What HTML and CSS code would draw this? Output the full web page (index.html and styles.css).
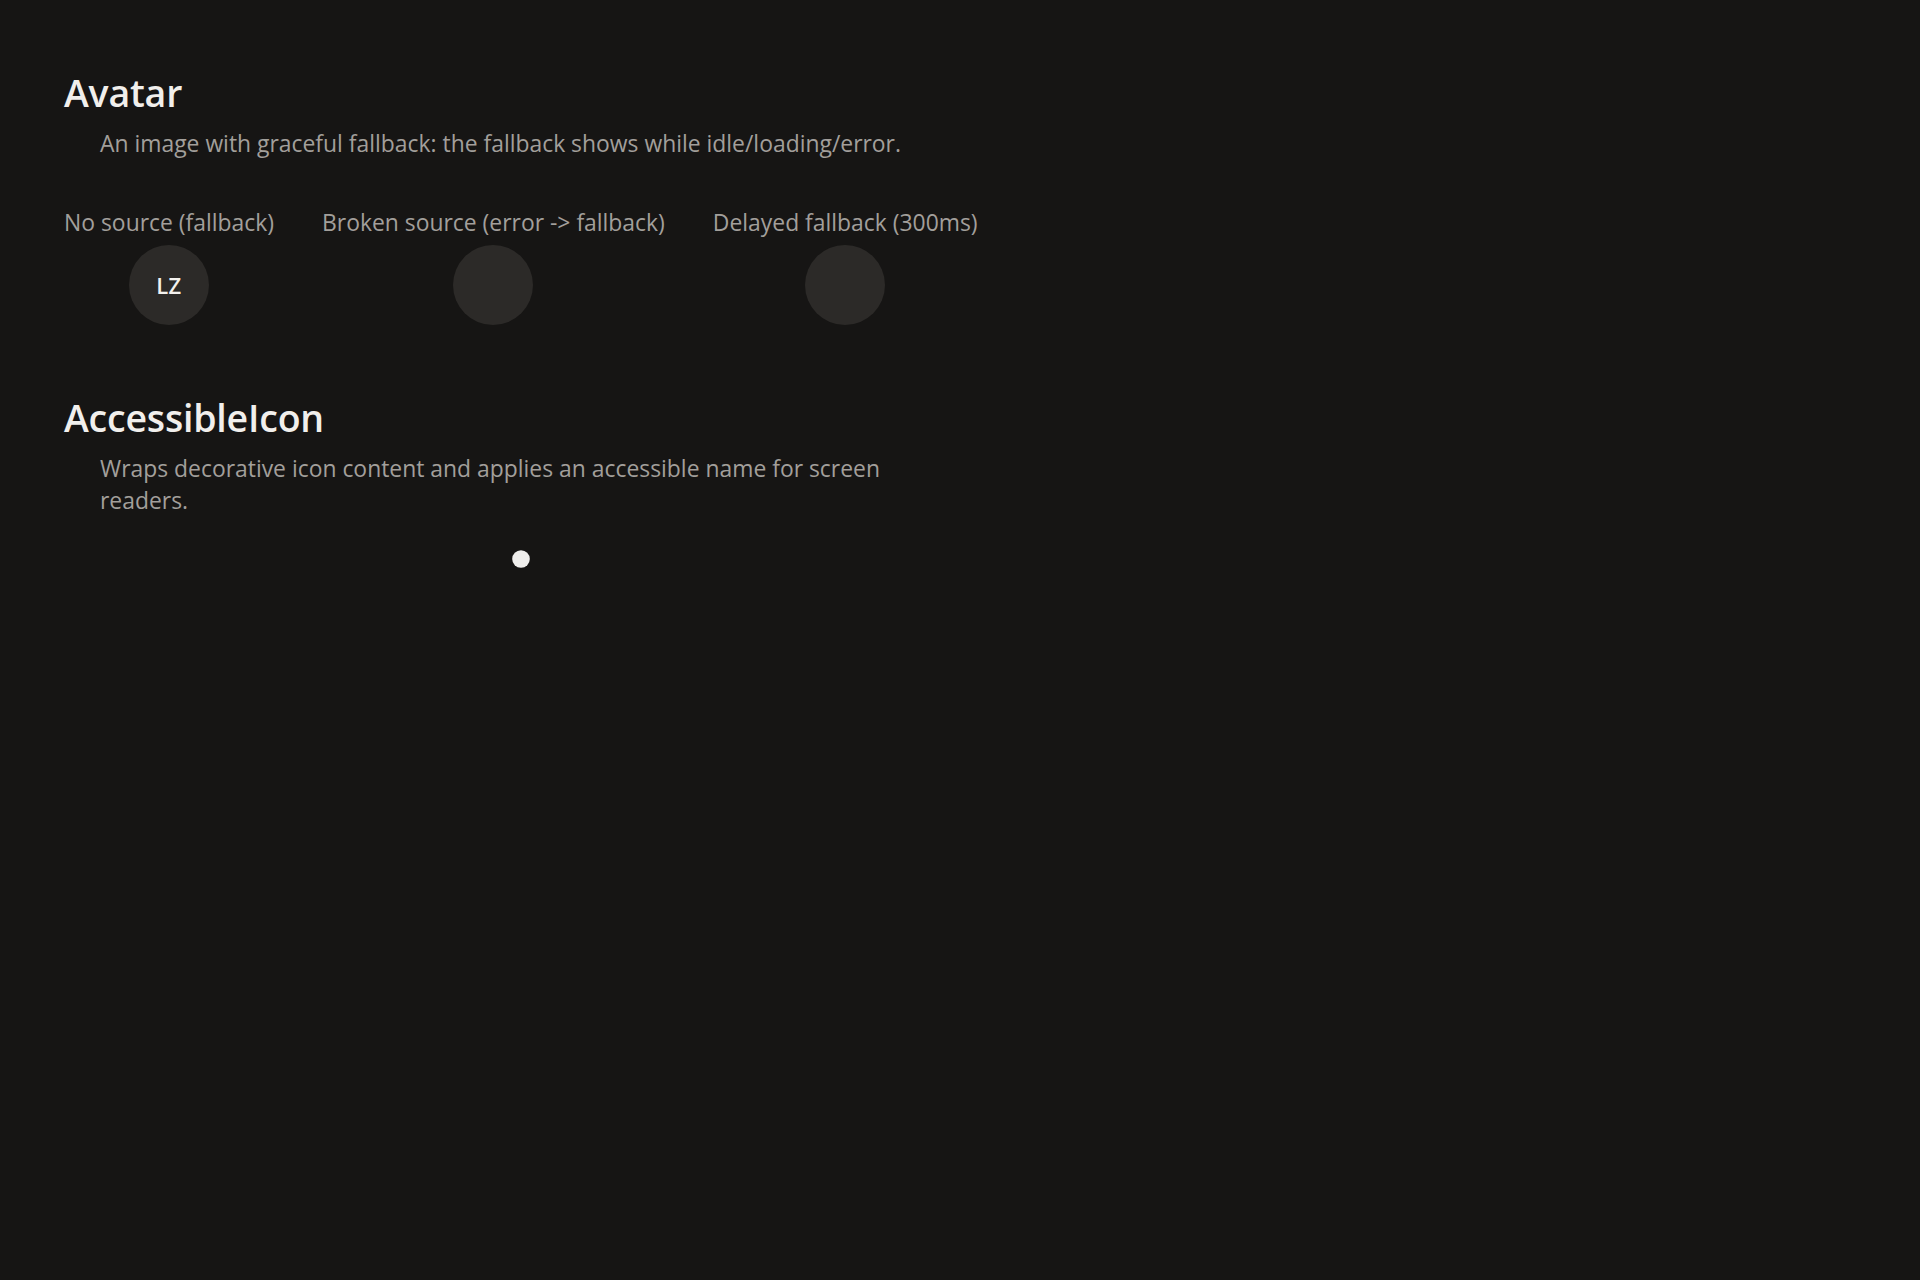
FILE: index.html
```html
<!DOCTYPE html>
<html lang="en">
<head>
<meta charset="utf-8">
<title>Primitives</title>
<link rel="stylesheet" href="styles.css">
</head>
<body>
<main class="page">
  <section class="demo">
    <h2 class="demo-title">Avatar</h2>
    <p class="demo-desc">An image with graceful fallback: the fallback shows while idle/loading/error.</p>
    <div class="avatar-row">
      <div class="avatar-case">
        <span class="case-label">No source (fallback)</span>
        <span class="avatar"><span class="avatar-fallback">LZ</span></span>
      </div>
      <div class="avatar-case">
        <span class="case-label">Broken source (error -&gt; fallback)</span>
        <span class="avatar"></span>
      </div>
      <div class="avatar-case">
        <span class="case-label">Delayed fallback (300ms)</span>
        <span class="avatar"></span>
      </div>
    </div>
  </section>

  <section class="demo">
    <h2 class="demo-title">AccessibleIcon</h2>
    <p class="demo-desc">Wraps decorative icon content and applies an accessible name for screen readers.</p>
    <div class="icon-row">
      <span class="icon-wrap" role="img" aria-label="Status">
        <svg class="icon-dot" viewBox="0 0 18 18" width="18" height="18" aria-hidden="true"><circle cx="9" cy="9" r="8.8" fill="#efeeec"/></svg>
      </span>
    </div>
  </section>
</main>
</body>
</html>
```

FILE: styles.css
```css
html, body {
  margin: 0;
  padding: 0;
  background: #161514;
}

body {
  font-family: "Open Sans", "Noto Sans", "DejaVu Sans", sans-serif;
  color: #efedea;
  min-height: 1280px;
}

.page {
  width: fit-content;
  padding: 71px 64px 0 64px;
}

.demo {
  display: flex;
  flex-direction: column;
}

.demo + .demo {
  margin-top: 71px;
}

.demo-title {
  margin: 0;
  font-size: 37.5px;
  line-height: 44px;
  font-weight: 600;
  color: #f1efec;
  letter-spacing: -0.2px;
}

.demo-desc {
  margin: 13px 0 0 36px;
  font-size: 22.9px;
  line-height: 32px;
  color: #a29f9b;
  max-width: 830px;
}

.avatar-row {
  display: flex;
  gap: 48px;
  margin-top: 49px;
}

.avatar-case {
  display: flex;
  flex-direction: column;
  align-items: center;
  gap: 8px;
}

.case-label {
  font-size: 22.9px;
  line-height: 28px;
  color: #a29f9b;
}

.avatar {
  width: 80px;
  height: 80px;
  border-radius: 50%;
  background: #2c2a28;
  display: flex;
  align-items: center;
  justify-content: center;
}

.avatar-fallback {
  font-size: 22px;
  font-weight: 600;
  color: #f3f1ee;
  letter-spacing: 0.3px;
}

.icon-row {
  display: flex;
  justify-content: center;
  margin-top: 33px;
}

.icon-wrap {
  display: inline-flex;
}

.icon-dot {
  display: block;
}
```
